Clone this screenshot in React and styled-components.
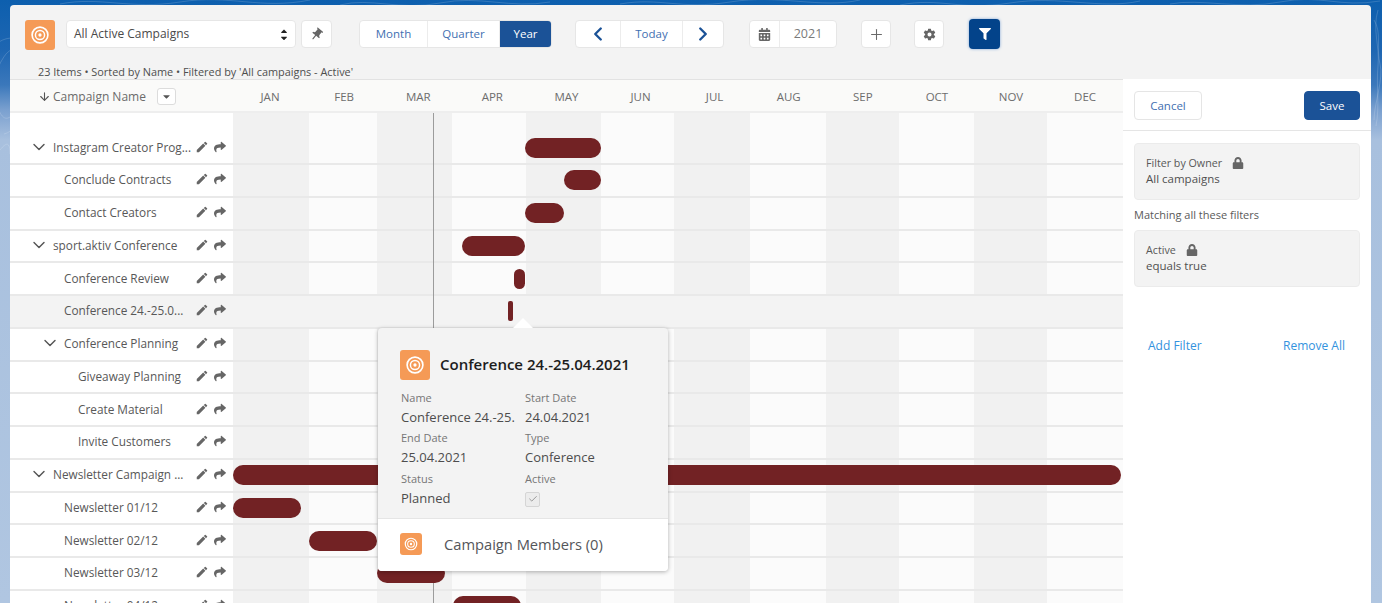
import React from "react";
import styled, { createGlobalStyle } from "styled-components";
import { ChevronDown, ChevronLeft, ChevronRight, ArrowDown, Plus, Check } from "lucide-react";
import { FaCaretUp, FaCaretDown, FaCalendarAlt, FaFilter, FaLock, FaShare } from "react-icons/fa";
import { MdEdit, MdPushPin } from "react-icons/md";
import { IoSettingsSharp } from "react-icons/io5";

const Global = createGlobalStyle`
  * { box-sizing: border-box; }
  html, body { margin: 0; height: 603px; overflow: hidden; }
  body { font-family: "Open Sans", "Noto Sans", sans-serif; color: #54565a; }
`;

const Page = styled.div`
  position: relative;
  height: 603px;
  overflow: hidden;
  padding: 5px 11px 0 10px;
  background: linear-gradient(180deg, #0d5fae 0, #1e66b2 50px, #3b78bb 85px, #7aa0cf 110px, #a8c0de 140px, #b0c6e1 603px);
`;
const Contours = styled.svg`
  position: absolute;
  left: 0;
  top: 0;
  width: 1382px;
  height: 603px;
`;
const Panel = styled.div`
  position: relative;
  height: 598px;
  display: flex;
  flex-direction: column;
  background: #f3f3f3;
  border-radius: 4px 4px 0 0;
  overflow: hidden;
`;
const Toolbar = styled.header`
  height: 75px;
  flex: none;
  padding: 15px 0 0 15px;
  border-bottom: 1px solid #e2e2e2;
`;
const Controls = styled.div`
  display: flex;
  align-items: flex-start;
  height: 29px;
`;
const Caption = styled.div`
  margin: 15px 0 0 13px;
  font-size: 10.9px;
  line-height: 16px;
  color: #4e4e4e;
`;
const AppIcon = styled.div`
  flex: none;
  width: ${(p) => p.$size}px;
  height: ${(p) => p.$size}px;
  display: flex;
  align-items: center;
  justify-content: center;
  background: #f59a56;
  border-radius: 3px;
`;
const Select = styled.div`
  width: 230px;
  height: 28px;
  margin-left: 11px;
  padding: 0 8px 2px 7px;
  display: flex;
  align-items: center;
  justify-content: space-between;
  background: #fff;
  border: 1px solid #e6e6e6;
  border-radius: 4px;
  font-size: 12px;
  color: #4a4a4a;
`;
const SelectArrows = styled.span`
  display: flex;
  flex-direction: column;
  color: #222;
  margin: 2px -2px 0 0;
  svg { display: block; margin: -1.5px 0; }
`;
const Group = styled.div`
  display: flex;
  height: 28px;
  margin-left: ${(p) => p.$ml}px;
  background: #fff;
  border: 1px solid #e6e6e6;
  border-radius: 4px;
  overflow: hidden;
`;
const Cell = styled.div`
  width: ${(p) => p.$w}px;
  display: flex;
  align-items: center;
  justify-content: center;
  padding-bottom: ${(p) => (p.$text ? 2 : 0)}px;
  font-size: ${(p) => p.$size || 11.5}px;
  color: ${(p) => p.$color || "#3f6fb1"};
  background: ${(p) => (p.$on ? "#1b5297" : "transparent")};
  ${(p) => p.$on && "color: #fff; font-weight: 500;"}
  & + & { border-left: 1px solid #ececec; }
`;
const FilterButton = styled.div`
  width: 31px;
  height: 30px;
  margin: -1px 0 0 25px;
  display: flex;
  align-items: center;
  justify-content: center;
  background: #03438a;
  border-radius: 4px;
  color: #fff;
  box-shadow: 0 0 3px #7fa5d6;
`;
const Content = styled.div`
  flex: 1;
  min-height: 0;
  display: flex;
`;
const Gantt = styled.section`
  flex: 1;
  min-width: 0;
  display: flex;
  flex-direction: column;
  background: #fff;
`;
const HeadRow = styled.div`
  height: 33px;
  flex: none;
  padding-top: 1px;
  display: flex;
  background: #fafaf9;
  border-bottom: 2px solid #eeeeee;
`;
const HeadLabel = styled.div`
  width: 223px;
  flex: none;
  display: flex;
  align-items: center;
  padding-left: 28px;
  font-size: 12px;
  color: #6b6b6b;
`;
const HeadText = styled.span`
  margin-left: 2px;
`;
const SortMenu = styled.span`
  width: 19px;
  height: 17px;
  margin-left: 11px;
  display: flex;
  align-items: center;
  justify-content: center;
  border: 1px solid #dcdcdc;
  border-radius: 3px;
  background: #fff;
  color: #555;
`;
const HeadMonths = styled.div`
  width: 888px;
  display: grid;
  grid-template-columns: repeat(12, 74.1px);
  align-items: center;
  text-align: center;
  font-size: 11.5px;
  color: #6d6d6d;
`;
const Body = styled.div`
  position: relative;
  flex: 1;
  min-height: 0;
  overflow: hidden;
`;
const Stripes = styled.div`
  position: absolute;
  top: 0;
  bottom: 0;
  left: 223px;
  width: 890px;
  display: flex;
`;
const Stripe = styled.div`
  flex: ${(p) => p.$days} 0 0;
  background: ${(p) => (p.$dark ? "#f1f1f1" : "#fbfbfb")};
`;
const TodayLine = styled.div`
  position: absolute;
  top: 0;
  bottom: 0;
  left: 423px;
  width: 1px;
  background: #9c9c9c;
  z-index: 2;
`;
const Row = styled.div`
  position: relative;
  display: flex;
  height: ${(p) => (p.$first ? 52 : 32.77)}px;
  border-bottom: 2px solid #e9e9e9;
  background: ${(p) => (p.$active ? "#f3f3f3" : "transparent")};
`;
const Label = styled.div`
  width: 223px;
  flex: none;
  display: flex;
  align-items: flex-end;
  height: 100%;
  background: ${(p) => (p.$active ? "#f3f3f3" : "#fff")};
  padding-left: ${(p) => 43 + p.$level * 11 + (p.$level === 2 ? 3 : 0)}px;
  font-size: 11.8px;
  color: #585858;
`;
const LabelInner = styled.div`
  position: relative;
  flex: 1;
  height: 33px;
  display: flex;
  align-items: center;
`;
const Toggle = styled.span`
  position: absolute;
  left: -24px;
  display: flex;
  color: #555;
`;
const Name = styled.span`
  flex: 1;
  white-space: nowrap;
`;
const RowIcons = styled.span`
  display: flex;
  align-items: center;
  gap: 5px;
  margin-right: 7px;
  color: #666;
`;
const Track = styled.div`
  position: relative;
  flex: 1;
`;
const Bar = styled.div`
  position: absolute;
  bottom: 5.5px;
  height: 20px;
  background: #722224;
  border-radius: ${(p) => (p.$thin ? 2 : 10)}px;
  z-index: 3;
`;
const Popover = styled.div`
  position: absolute;
  left: 368px;
  top: 215px;
  width: 290px;
  height: 243px;
  background: #f3f3f3;
  border-radius: 4px;
  box-shadow: 0 1px 4px rgba(0, 0, 0, 0.3);
  z-index: 5;
  display: flex;
  flex-direction: column;
  &::before {
    content: "";
    position: absolute;
    left: 135px;
    top: -10px;
    border-left: 10px solid transparent;
    border-right: 10px solid transparent;
    border-bottom: 10px solid #fff;
  }
`;
const PopMain = styled.div`
  flex: 1;
  padding: 22px 15px 0 22px;
`;
const PopHead = styled.div`
  display: flex;
  align-items: center;
  gap: 10px;
  margin-bottom: 9px;
`;
const PopTitle = styled.span`
  padding-bottom: 3px;
  font-size: 15px;
  font-weight: 600;
  white-space: nowrap;
  color: #1d1d1d;
`;
const Fields = styled.div`
  display: grid;
  margin-left: 1px;
  grid-template-columns: 124px 1fr;
  grid-auto-rows: 40.3px;
`;
const Field = styled.div`
  display: flex;
  flex-direction: column;
  white-space: nowrap;
`;
const FieldLabel = styled.span`
  font-size: 11px;
  line-height: 18px;
  color: #767676;
`;
const FieldValue = styled.span`
  font-size: 13px;
  line-height: 20px;
  color: #4d4d4d;
`;
const Tick = styled.span`
  width: 15px;
  height: 15px;
  margin-top: 4px;
  display: flex;
  align-items: center;
  justify-content: center;
  background: #ececec;
  border: 1px solid #d5d5d5;
  border-radius: 2px;
  color: #888;
`;
const PopFoot = styled.div`
  height: 53px;
  flex: none;
  display: flex;
  align-items: center;
  gap: 22px;
  padding: 0 0 2px 22px;
  background: #fff;
  border-top: 1px solid #e5e5e5;
  border-radius: 0 0 4px 4px;
  font-size: 14.7px;
  color: #54565a;
`;
const Aside = styled.aside`
  width: 248px;
  flex: none;
  margin-top: -1px;
  padding-bottom: 10px;
  background: #fff;
  z-index: 6;
`;
const AsideHead = styled.div`
  height: 52px;
  padding: 12px 11px 0;
  display: flex;
  justify-content: space-between;
  align-items: flex-start;
  border-bottom: 1px solid #e5e5e5;
`;
const ActionButton = styled.div`
  width: ${(p) => p.$w}px;
  height: 29px;
  display: flex;
  align-items: center;
  justify-content: center;
  border-radius: 4px;
  font-size: 11.5px;
  font-weight: ${(p) => (p.$primary ? 500 : 400)};
  background: ${(p) => (p.$primary ? "#1b5297" : "#fff")};
  color: ${(p) => (p.$primary ? "#fff" : "#3f6fb1")};
  border: 1px solid ${(p) => (p.$primary ? "#1b5297" : "#e5e5e5")};
`;
const AsideBody = styled.div`
  padding: 12px 11px 0;
`;
const FilterCard = styled.div`
  height: 57px;
  padding: 10px 11px;
  background: #f3f3f3;
  border: 1px solid #ebebeb;
  border-radius: 4px;
`;
const CardTitle = styled.div`
  display: flex;
  align-items: center;
  gap: 10px;
  height: 17px;
  font-size: 10.7px;
  color: #585858;
`;
const CardValue = styled.div`
  font-size: 11.5px;
  line-height: 16px;
  color: #505050;
`;
const Note = styled.div`
  height: 30px;
  padding-bottom: 2px;
  display: flex;
  align-items: center;
  font-size: 11px;
  color: #5a5a5a;
`;
const Links = styled.div`
  display: flex;
  justify-content: space-between;
  margin-top: 50px;
  padding: 0 15px 0 14px;
  font-size: 12px;
  color: #3392de;
`;

const Target = ({ size }) => (
  <svg width={size} height={size} viewBox="0 0 24 24" fill="none" stroke="#fff">
    <circle cx="12" cy="12" r="8.6" strokeWidth="1.8" />
    <circle cx="12" cy="12" r="5" strokeWidth="1.6" />
    <circle cx="12" cy="12" r="1.8" fill="#fff" stroke="none" />
  </svg>
);

const contourPaths = [
  "M2 60c12-22 28-8 22 14s-4 40-16 44-18-40-6-58z",
  "M-4 44c18-14 38-2 32 26s-6 60-24 64",
  "M0 150c8-10 10-6 10 4",
  "M60 4c40-8 70 6 120-2s80 8 130-2",
  "M340 5c30-8 60 6 100-2s70 6 110-1",
  "M620 4c40-7 60 6 110-2s90 7 130-2",
  "M900 5c40-8 60 6 110-2s90 7 130-2",
  "M1170 4c30-6 70 6 110-2s60 6 100-1",
  "M1374 20c8 12 2 30 6 44s-6 40-6 56",
  "M1378 10c-6 20 2 36 0 56s2 40-2 60",
];

const days = [31, 28, 31, 30, 31, 30, 31, 31, 30, 31, 30, 31];
const months = ["JAN", "FEB", "MAR", "APR", "MAY", "JUN", "JUL", "AUG", "SEP", "OCT", "NOV", "DEC"];

const rows = [
  { name: "Instagram Creator Prog...", level: 0, open: true, first: true, bar: [525, 601] },
  { name: "Conclude Contracts", level: 1, bar: [564, 601] },
  { name: "Contact Creators", level: 1, bar: [525, 564] },
  { name: "sport.aktiv Conference", level: 0, open: true, bar: [462, 525] },
  { name: "Conference Review", level: 1, bar: [514, 525] },
  { name: "Conference 24.-25.0...", level: 1, active: true, bar: [508, 513], thin: true },
  { name: "Conference Planning", level: 1, open: true },
  { name: "Giveaway Planning", level: 2 },
  { name: "Create Material", level: 2 },
  { name: "Invite Customers", level: 2 },
  { name: "Newsletter Campaign ...", level: 0, open: true, bar: [233, 1121] },
  { name: "Newsletter 01/12", level: 1, bar: [233, 301] },
  { name: "Newsletter 02/12", level: 1, bar: [309, 377] },
  { name: "Newsletter 03/12", level: 1, bar: [377, 445] },
  { name: "Newsletter 04/12", level: 1, bar: [453, 521] },
];

const fields = [
  ["Name", "Conference 24.-25."],
  ["Start Date", "24.04.2021"],
  ["End Date", "25.04.2021"],
  ["Type", "Conference"],
  ["Status", "Planned"],
];

export default function App() {
  return (
    <Page>
      <Global />
      <Contours viewBox="0 0 1382 603" fill="none" stroke="#fff" strokeOpacity="0.16" strokeWidth="1">
        {contourPaths.map((d) => <path key={d} d={d} />)}
      </Contours>
      <Panel>
        <Toolbar>
          <Controls>
            <AppIcon $size={30}><Target size={22} /></AppIcon>
            <Select>
              All Active Campaigns
              <SelectArrows><FaCaretUp size={10} /><FaCaretDown size={10} /></SelectArrows>
            </Select>
            <Group $ml={5}><Cell $w={29} $color="#666"><MdPushPin size={15} style={{ transform: "rotate(40deg)" }} /></Cell></Group>
            <Group $ml={27}>
              <Cell $w={67} $text>Month</Cell>
              <Cell $w={72} $text>Quarter</Cell>
              <Cell $w={52} $text $on>Year</Cell>
            </Group>
            <Group $ml={23}>
              <Cell $w={44} $color="#1b5297"><ChevronLeft size={22} strokeWidth={2.6} /></Cell>
              <Cell $w={62} $text>Today</Cell>
              <Cell $w={41} $color="#1b5297"><ChevronRight size={22} strokeWidth={2.6} /></Cell>
            </Group>
            <Group $ml={25}>
              <Cell $w={29} $color="#666"><FaCalendarAlt size={13} /></Cell>
              <Cell $w={57} $text $size={12.5} $color="#7a7a7a">2021</Cell>
            </Group>
            <Group $ml={24}><Cell $w={28} $color="#6a6a6a"><Plus size={17} strokeWidth={1.5} /></Cell></Group>
            <Group $ml={23}><Cell $w={28} $color="#666"><IoSettingsSharp size={13} /></Cell></Group>
            <FilterButton><FaFilter size={12} /></FilterButton>
          </Controls>
          <Caption>23 Items • Sorted by Name • Filtered by 'All campaigns - Active'</Caption>
        </Toolbar>
        <Content>
          <Gantt>
            <HeadRow>
              <HeadLabel>
                <ArrowDown size={13} strokeWidth={2} color="#555" />
                <HeadText>Campaign Name</HeadText>
                <SortMenu><FaCaretDown size={11} /></SortMenu>
              </HeadLabel>
              <HeadMonths>{months.map((m) => <span key={m}>{m}</span>)}</HeadMonths>
            </HeadRow>
            <Body>
              <Stripes>{days.map((d, i) => <Stripe key={i} $days={d} $dark={i % 2 === 0} />)}</Stripes>
              {rows.map((r) => (
                <Row key={r.name} $first={r.first} $active={r.active}>
                  <Label $level={r.level} $active={r.active}>
                    <LabelInner>
                      {r.open && <Toggle><ChevronDown size={20} strokeWidth={1.7} /></Toggle>}
                      <Name>{r.name}</Name>
                      <RowIcons><MdEdit size={14} /><FaShare size={12} /></RowIcons>
                    </LabelInner>
                  </Label>
                  <Track>
                    {r.bar && <Bar $thin={r.thin} style={{ left: r.bar[0] - 233, width: r.bar[1] - r.bar[0] }} />}
                  </Track>
                </Row>
              ))}
              <TodayLine />
              <Popover>
                <PopMain>
                  <PopHead><AppIcon $size={30}><Target size={22} /></AppIcon><PopTitle>Conference 24.-25.04.2021</PopTitle></PopHead>
                  <Fields>
                    {fields.map(([l, v]) => (
                      <Field key={l}><FieldLabel>{l}</FieldLabel><FieldValue>{v}</FieldValue></Field>
                    ))}
                    <Field>
                      <FieldLabel>Active</FieldLabel>
                      <Tick><Check size={10} strokeWidth={2} /></Tick>
                    </Field>
                  </Fields>
                </PopMain>
                <PopFoot><AppIcon $size={22}><Target size={16} /></AppIcon>Campaign Members (0)</PopFoot>
              </Popover>
            </Body>
          </Gantt>
          <Aside>
            <AsideHead>
              <ActionButton $w={68}>Cancel</ActionButton>
              <ActionButton $w={56} $primary>Save</ActionButton>
            </AsideHead>
            <AsideBody>
              <FilterCard>
                <CardTitle>Filter by Owner <FaLock size={12} color="#666" /></CardTitle>
                <CardValue>All campaigns</CardValue>
              </FilterCard>
              <Note>Matching all these filters</Note>
              <FilterCard>
                <CardTitle>Active <FaLock size={12} color="#666" /></CardTitle>
                <CardValue>equals true</CardValue>
              </FilterCard>
              <Links><span>Add Filter</span><span>Remove All</span></Links>
            </AsideBody>
          </Aside>
        </Content>
      </Panel>
    </Page>
  );
}
